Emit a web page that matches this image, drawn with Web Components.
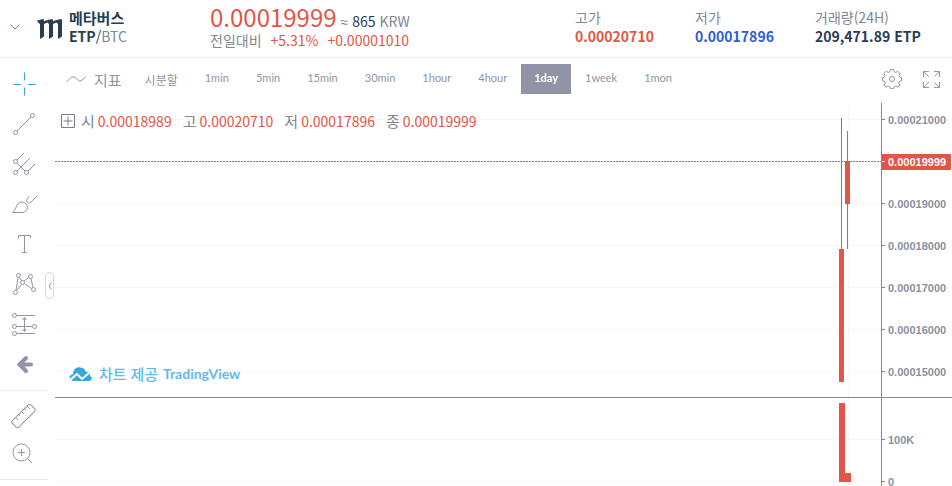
<!DOCTYPE html>
<html lang="ko">
<head>
<meta charset="utf-8">
<title>ETP/BTC</title>
<style>
    body {
        margin: 0;
        background: #fff;
        color: #7f8794;
        font-family: "Noto Sans CJK KR", "Noto Sans", sans-serif;
        font-size: 14px;
        --red: #e25648;
        --blue: #2c5fd0;
        --dark: #293c51;
        --grey: #7f8794;
        --tool: #9194a6;
        --line: #e9e9f2;
    }
</style>
</head>
<body>
<trade-page></trade-page>

<script type="module">
//@ts-check

function html(strings, ...values) {
    return String.raw({ raw: strings }, ...values);
}

/**
 * @param {string} s
 */
function createTemplate(s) {
    const template = document.createElement("template");
    template.innerHTML = s;
    return template;
}

function attachTemplate(el, template) {
    const root = el.attachShadow({ mode: "open" });
    root.appendChild(template.content.cloneNode(true));
    return root;
}

// ***** HEADER *****

class MarketName extends HTMLElement {
    static template = createTemplate(html`
        <style>
            :host { display: flex; align-items: center; }
            button { border: 0; background: none; padding: 0; margin: 0 17px 0 10px; display: flex; }
            svg { display: block; fill: none; stroke: #5b8bab; }
            .logo { fill: var(--dark); stroke: none; margin: 3px 7px 0 0; }
            h1, p { margin: 0; line-height: 19px; font-size: 14px; }
            h1 { font-size: 15px; }
            h1, b { color: var(--dark); font-weight: 700; }
            .slash { color: var(--dark); }
        </style>
        <button aria-label="마켓 선택"><svg width="10" height="6"><path d="M0.5 0.5 5 5 9.5 0.5"/></svg></button>
        <svg class="logo" width="25" height="20" viewBox="0 0 25 20">
            <path d="M0 1.500C2 1 4 .5 6.500 0L7 1V17.500L3 20V5L1.500 4Z"/>
            <path d="M7 2.500C9 1 12 .5 15.500 0L16 1V17.500L12 20V5L10.500 3.500 7 5Z"/>
            <path d="M16 2.500C18 1 21 .5 24.500 0L25 1V17.500L21 20V5L19.500 3.500 16 5Z"/>
        </svg>
        <div>
            <h1><slot name="name"></slot></h1>
            <p><b><slot name="coin"></slot></b><span class="slash">/</span><slot name="base"></slot></p>
        </div>
    `);
    connectedCallback() {
        attachTemplate(this, MarketName.template);
    }
}
customElements.define("market-name", MarketName);

class MarketPrice extends HTMLElement {
    static template = createTemplate(html`
        <style>
            :host { display: block; white-space: nowrap; }
            .row { display: flex; align-items: baseline; gap: 4px; line-height: 18px; }
            .change { gap: 9px; }
            .price { font-size: 24px; line-height: 28px; }
            .price, .diff { color: var(--red); }
            .krw { color: var(--dark); }
            .about { font-family: "Liberation Sans", sans-serif; }
        </style>
        <div class="row">
            <span class="price"><slot name="price"></slot></span>
            <span class="about">≈</span>
            <span><span class="krw"><slot name="krw"></slot></span> KRW</span>
        </div>
        <div class="row change">
            <span>전일대비</span>
            <span class="diff"><slot name="percent"></slot></span>
            <span class="diff"><slot name="diff"></slot></span>
        </div>
    `);
    connectedCallback() {
        attachTemplate(this, MarketPrice.template);
    }
}
customElements.define("market-price", MarketPrice);

class MarketStat extends HTMLElement {
    static template = createTemplate(html`
        <style>
            :host { display: block; color: var(--dark); line-height: 19px; white-space: nowrap; }
            :host([tone="up"]) { color: var(--red); }
            :host([tone="down"]) { color: var(--blue); }
            .label { color: var(--grey); }
            .value { font-weight: 700; }
        </style>
        <div class="label"><slot name="label"></slot></div>
        <div class="value"><slot></slot></div>
    `);
    connectedCallback() {
        attachTemplate(this, MarketStat.template);
    }
}
customElements.define("market-stat", MarketStat);

class MarketHeader extends HTMLElement {
    static template = createTemplate(html`
        <style>
            :host {
                display: grid;
                grid-template-columns: 210px 1fr 120px 120px 137px;
                align-items: start;
                padding: 8px 0;
                border-bottom: 1px solid var(--line);
            }
            market-price { margin-top: -5px; }
        </style>
        <market-name>
            <span slot="name">메타버스</span><span slot="coin">ETP</span><span slot="base">BTC</span>
        </market-name>
        <market-price>
            <span slot="price">0.00019999</span><span slot="krw">865</span>
            <span slot="percent">+5.31%</span><span slot="diff">+0.00001010</span>
        </market-price>
        <market-stat tone="up"><span slot="label">고가</span>0.00020710</market-stat>
        <market-stat tone="down"><span slot="label">저가</span>0.00017896</market-stat>
        <market-stat><span slot="label">거래량(24H)</span>209,471.89 ETP</market-stat>
    `);
    connectedCallback() {
        attachTemplate(this, MarketHeader.template);
    }
}
customElements.define("market-header", MarketHeader);

// ***** DRAWING TOOLS *****

// every icon is drawn on a 28x28 box
const ICONS = {
    cross: `<g stroke="#37a6dc"><path d="M14.500 2.500v8M14.500 17.500v8M3 14.500h8M18 14.500h8"/></g>`,
    trend: `<circle cx="5.500" cy="22.500" r="2"/><circle cx="22.500" cy="5.500" r="2"/><path d="M7 21 21 7"/>`,
    pitchfork: `<circle cx="5.500" cy="11.500" r="2"/><circle cx="5.500" cy="22.500" r="2"/><circle cx="16.500" cy="22.500" r="2"/>
        <path d="M7 10 14 3M7 21 20 8M18 21l7-7M7 13l8 8"/>`,
    brush: `<path d="M2.500 22.500c4-2 3-10 9.500-10.500 3.500 0 5.500 2.500 5.500 5.500 0 3-2.500 5-5.500 5ZM27 6l-6.500 6.500c-2 1.500-5-1-3.500-3.500l2-2.500"/>`,
    text: `<path d="M8.500 8V5.500h12V8M14.500 5.500v17M12 22.500h5"/>`,
    pattern: `<circle cx="8.500" cy="5.500" r="2"/><circle cx="20.500" cy="6.500" r="2"/><circle cx="12.500" cy="12.500" r="2"/>
        <circle cx="5.500" cy="22.500" r="2"/><circle cx="23.500" cy="19.500" r="2"/>
        <path d="M8 8 6 20M9.500 7.500l2 3M14 11l5-3.500M21 8.500l2 9M14.500 13.500l7 5M11.500 14.500l-5 6"/>`,
    forecast: `<circle cx="4.500" cy="5.500" r="2"/><circle cx="4.500" cy="16.500" r="2"/><circle cx="24.500" cy="16.500" r="2"/><circle cx="4.500" cy="23.500" r="2"/>
        <path d="M7 5.500h18M7 16.500h15M7 23.500h18M14.500 8v13M12.500 10l2-2.500 2 2.500M12.500 19l2 2.500 2-2.500"/>`,
    back: `<path d="M16 8 9.500 14.500 16 21M10 14.500H21" stroke-width="4" stroke-linecap="round"/>`,
    ruler: `<rect x="0.500" y="9.500" width="26" height="9" rx="1.500" transform="rotate(-45 13.500 14)"/>
        <path d="m5 15 3 3M8 12l2 2M11 9l3 3M14 6l2 2M17 4l3 3"/>`,
    zoom: `<circle cx="11.500" cy="12.500" r="8.500"/><path d="M8 12.500h7M11.500 9v7M18 19l4 4"/>`,
};

class ToolButton extends HTMLElement {
    static template = createTemplate(html`
        <style>
            :host { display: block; }
            button { display: grid; place-items: center; width: 100%; height: var(--tool-height, 40px); padding: 0; border: 0; background: none; }
            svg { fill: none; stroke: var(--tool); stroke-width: 1; }
        </style>
        <button><svg width="28" height="28" viewBox="0 0 28 28"></svg></button>
    `);
    connectedCallback() {
        const root = attachTemplate(this, ToolButton.template);
        root.querySelector("svg").innerHTML = ICONS[this.getAttribute("icon")];
        root.querySelector("button").setAttribute("aria-label", this.getAttribute("label"));
    }
}
customElements.define("tool-button", ToolButton);

class DrawingTools extends HTMLElement {
    static template = createTemplate(html`
        <style>
            :host { display: block; position: relative; padding-right: 7px; }
            .group { width: 48px; border-bottom: 1px solid var(--line); padding: 6px 0; }
            .small { --tool-height: 38px; }
            .handle {
                position: absolute; right: 1px; top: 214px;
                width: 9px; height: 27px; padding: 0;
                display: grid; place-items: center;
                background: #fff; border: 1px solid #d8d9df; border-radius: 4px;
            }
            .handle svg { fill: none; stroke: #7d9cb0; }
        </style>
        <div class="group">
            <tool-button icon="cross" label="십자선"></tool-button>
            <tool-button icon="trend" label="추세선"></tool-button>
            <tool-button icon="pitchfork" label="피치포크"></tool-button>
            <tool-button icon="brush" label="브러쉬"></tool-button>
            <tool-button icon="text" label="텍스트"></tool-button>
            <tool-button icon="pattern" label="패턴"></tool-button>
            <tool-button icon="forecast" label="예측"></tool-button>
            <tool-button icon="back" label="뒤로"></tool-button>
        </div>
        <div class="group small">
            <tool-button icon="ruler" label="자"></tool-button>
            <tool-button icon="zoom" label="확대"></tool-button>
        </div>
        <button class="handle" aria-label="접기"><svg width="4" height="8"><path d="M3.500 0.500 1 4l2.500 3.500"/></svg></button>
    `);
    connectedCallback() {
        attachTemplate(this, DrawingTools.template);
    }
}
customElements.define("drawing-tools", DrawingTools);

// ***** CHART *****

class ChartToolbar extends HTMLElement {
    static template = createTemplate(html`
        <style>
            :host { display: flex; align-items: center; padding: 6px 12px 9px 11px; color: var(--tool); }
            button {
                display: flex; align-items: center; height: 30px; border: 0; background: none;
                color: inherit; font: 11px "Lato", "Noto Sans CJK KR", sans-serif; padding: 0 13px 3px;
            }
            svg { display: block; fill: none; stroke: var(--tool); }
            .indicators { font: 15px "Noto Sans CJK KR", sans-serif; gap: 8px; padding: 0 10px 0 0; }
            .ko { font-size: 12px; padding-bottom: 0; }
            nav { display: flex; gap: 1px; flex: 1; }
            .on { background: var(--tool); color: #fff; font-weight: 700; }
            .icon { padding: 0; margin-left: 21px; }
        </style>
        <button class="indicators">
            <svg width="20" height="8"><path d="M0.500 7C4 4 5 1 8 2s4 5 7 4c2-1 3-3 4.500-4.500"/></svg>지표
        </button>
        <nav>
            <button class="ko">시분할</button>
            <button>1min</button>
            <button>5min</button>
            <button>15min</button>
            <button>30min</button>
            <button>1hour</button>
            <button>4hour</button>
            <button class="on">1day</button>
            <button>1week</button>
            <button>1mon</button>
        </nav>
        <button class="icon" aria-label="설정">
            <svg width="20" height="20" viewBox="0 0 20 20">
                <circle cx="10" cy="10" r="2.500"/>
                <path stroke-linejoin="round" d="M8.300 0.500h3.400l.5 2.300 1.600.7 2-1.300 2.300 2.300-1.300 2 .7 1.700 2 .4v3.200l-2 .5-.7 1.700 1.300 2-2.300 2.200-2-1.200-1.600.7-.5 2H8.300l-.5-2-1.600-.7-2 1.200-2.300-2.200 1.300-2-.7-1.700-2-.5V8.600l2-.4.7-1.700-1.300-2 2.300-2.300 2 1.300 1.600-.7z"/>
            </svg>
        </button>
        <button class="icon" aria-label="전체 화면">
            <svg width="17" height="17"><path d="M.5 6V.5H6M.5.5l5 5M11 .5h5.500V6M16.500.5l-5 5M.5 11v5.500H6M.5 16.500l5-5M11 16.500h5.500V11M16.500 16.500l-5-5"/></svg>
        </button>
    `);
    connectedCallback() {
        attachTemplate(this, ChartToolbar.template);
    }
}
customElements.define("chart-toolbar", ChartToolbar);

class ChartLegend extends HTMLElement {
    static template = createTemplate(html`
        <style>
            :host { display: flex; align-items: center; line-height: 20px; white-space: nowrap; }
            svg { fill: none; stroke: #777c88; margin-right: 6px; }
            dl { display: flex; gap: 11px; margin: 0; }
            div { display: flex; gap: 3px; }
            dt { font-size: 15px; }
            dd { margin: 0; color: var(--red); }
        </style>
        <svg width="14" height="14"><path d="M.5.5h13v13H.5zM2.500 7h9M7 2.500v9"/></svg>
        <dl>
            <div><dt>시</dt><dd>0.00018989</dd></div>
            <div><dt>고</dt><dd>0.00020710</dd></div>
            <div><dt>저</dt><dd>0.00017896</dd></div>
            <div><dt>종</dt><dd>0.00019999</dd></div>
        </dl>
    `);
    connectedCallback() {
        attachTemplate(this, ChartLegend.template);
    }
}
customElements.define("chart-legend", ChartLegend);

/**
 * One pane of the chart. Values run from `top` to `bottom`,
 * candles are placed from the price axis leftwards.
 */
class ChartPane extends HTMLElement {
    static template = createTemplate(html`
        <style>
            :host { display: block; position: relative; min-height: 0; overflow: hidden; }
            svg { position: absolute; inset: 0; width: 100%; height: 100%; }
            text { font: bold 11px "Liberation Sans", Arial, sans-serif; fill: #8a919d; }
            rect { fill: var(--red); shape-rendering: crispEdges; }
            .grid { fill: #f7f7f9; }
            .axis { fill: var(--grey); }
            .last { fill: #fff; }
            line { stroke: var(--red); stroke-dasharray: 2 1; }
        </style>
        <svg></svg>
    `);
    connectedCallback() {
        this.svg = attachTemplate(this, ChartPane.template).querySelector("svg");
        new ResizeObserver(() => this.draw()).observe(this);
        this.draw();
    }
    draw() {
        const w = this.clientWidth;
        const h = this.clientHeight;
        const axis = w - 71;
        const top = Number(this.getAttribute("top"));
        const bottom = Number(this.getAttribute("bottom"));
        const y = v => Math.round((top - v) / (top - bottom) * h);
        const rect = (x, y1, rw, rh, cls = "") => `<rect class="${cls}" x="${x}" y="${y1}" width="${rw}" height="${rh}"/>`;

        let out = rect(axis - 33, 0, 1, h, "grid");
        for (const tick of JSON.parse(this.getAttribute("ticks"))) {
            const ty = y(tick[0]);
            out += rect(0, ty, axis, 1, "grid") + rect(axis, ty, 4, 1, "axis");
            out += `<text x="${axis + 7}" y="${ty + 5}">${tick[1]}</text>`;
        }
        out += rect(axis, 0, 1, h, "axis");
        // [offset from axis, width, upper value, lower value]
        for (const [dx, bw, hi, lo] of JSON.parse(this.getAttribute("bars"))) {
            out += rect(axis - dx, y(hi), bw, y(lo) - y(hi));
        }
        if (this.hasAttribute("last")) {
            const ly = y(Number(this.getAttribute("last")));
            out += `<line x1="0" x2="${axis}" y1="${ly + 0.5}" y2="${ly + 0.5}"/>`;
            out += rect(axis + 1, ly - 7, 69, 16) + rect(axis, ly, 4, 1, "last");
            out += `<text class="last" x="${axis + 7}" y="${ly + 5}">0.000${this.getAttribute("last")}</text>`;
        }
        this.svg.innerHTML = out;
    }
}
customElements.define("chart-pane", ChartPane);

class PriceChart extends HTMLElement {
    static template = createTemplate(html`
        <style>
            :host { display: flex; flex-direction: column; position: relative; }
            .price { flex: 294; border-bottom: 1px solid var(--grey); }
            .volume { flex: 88; }
            chart-legend { position: absolute; left: 6px; top: 8px; }
            a {
                position: absolute; left: 14px; bottom: 102px;
                display: flex; align-items: center; gap: 7px;
                color: #62bce6; text-decoration: none; line-height: 20px;
                font-family: "Lato", "Noto Sans CJK KR", sans-serif; font-weight: 700;
            }
            .by { font-size: 15px; font-weight: 500; }
            .brand { display: flex; gap: 5px; align-items: center; }
        </style>
        <chart-pane class="price" top="21381" bottom="14381" last="19999"
            ticks='[[21000,"0.00021000"],[19000,"0.00019000"],[18000,"0.00018000"],[17000,"0.00017000"],[16000,"0.00016000"],[15000,"0.00015000"]]'
            bars="[[40,1,21020,17900],[42,5,17900,14735],[34,1,20710,17896],[36,5,19999,18980]]"></chart-pane>
        <chart-pane class="volume" top="199" bottom="-11"
            ticks='[[100,"100K"],[0,"0"]]'
            bars="[[42,6,187,-2],[36,6,20,-2]]"></chart-pane>
        <chart-legend></chart-legend>
        <a href="#">
            <svg width="23" height="14" viewBox="0 0 23 14">
                <path fill="#37a6dc" d="M5 14C1 14-1 10 2 8c1 0 1-1 2-1C4 2 9-1 13 1c2 0 3 2 4 4 3 0 4 1 4 4 3 1 2 5-1 5z"/>
                <path fill="none" stroke="#fff" stroke-width="2" d="m1 13 7-6 5 5 7-6"/>
            </svg>
            <span class="brand"><span class="by">차트 제공</span> <span>TradingView</span></span>
        </a>
    `);
    connectedCallback() {
        attachTemplate(this, PriceChart.template);
    }
}
customElements.define("price-chart", PriceChart);

class TradePage extends HTMLElement {
    static template = createTemplate(html`
        <style>
            :host { display: flex; flex-direction: column; height: 100vh; overflow: hidden; }
            main { flex: 1; min-height: 0; display: flex; }
            section { flex: 1; min-width: 0; display: flex; flex-direction: column; }
            price-chart { flex: 1; min-height: 0; }
        </style>
        <market-header></market-header>
        <main>
            <drawing-tools></drawing-tools>
            <section>
                <chart-toolbar></chart-toolbar>
                <price-chart></price-chart>
            </section>
        </main>
    `);
    connectedCallback() {
        attachTemplate(this, TradePage.template);
    }
}
customElements.define("trade-page", TradePage);
</script>
</body>
</html>
